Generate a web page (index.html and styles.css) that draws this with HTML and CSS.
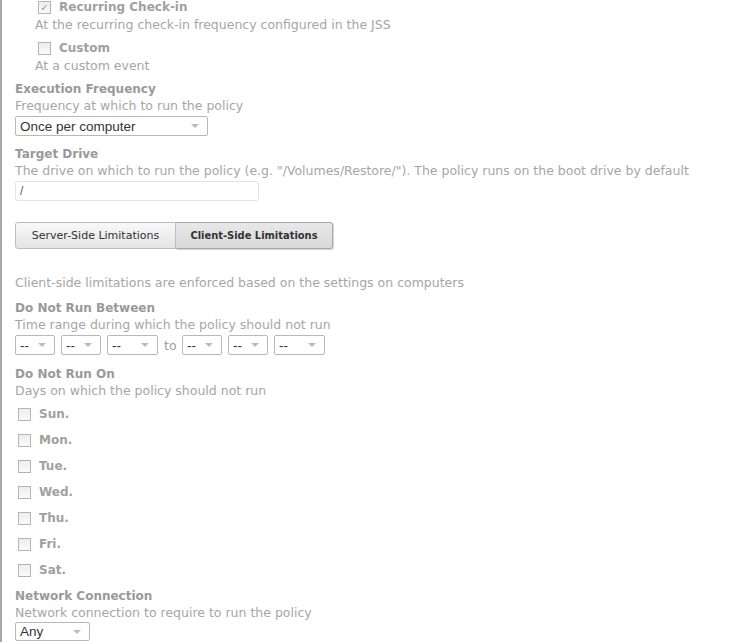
FILE: index.html
```html
<!DOCTYPE html>
<html lang="en">
<head>
    <meta charset="UTF-8">
    <title>Client-Side Limitations</title>
    <link rel="stylesheet" href="styles.css">
</head>
<body>
<div class="page">
    <div class="trigger first">
        <label class="check-row"><span class="box checked">&#10003;</span><span class="check-label">Recurring Check-in</span></label>
        <p class="desc">At the recurring check-in frequency configured in the JSS</p>
    </div>
    <div class="trigger">
        <label class="check-row"><span class="box"></span><span class="check-label">Custom</span></label>
        <p class="desc">At a custom event</p>
    </div>

    <div class="field exec">
        <h4>Execution Frequency</h4>
        <p class="desc">Frequency at which to run the policy</p>
        <div class="select wide"><span>Once per computer</span><i class="arrow"></i></div>
    </div>

    <div class="field drive">
        <h4>Target Drive</h4>
        <p class="desc">The drive on which to run the policy (e.g. "/Volumes/Restore/"). The policy runs on the boot drive by default</p>
        <div class="text-input">/</div>
    </div>

    <div class="tabs">
        <button class="tab">Server-Side Limitations</button>
        <button class="tab active">Client-Side Limitations</button>
    </div>

    <p class="desc intro">Client-side limitations are enforced based on the settings on computers</p>

    <div class="field between">
        <h4>Do Not Run Between</h4>
        <p class="desc">Time range during which the policy should not run</p>
        <div class="time-row">
            <div class="select small"><span>--</span><i class="arrow"></i></div>
            <div class="select small"><span>--</span><i class="arrow"></i></div>
            <div class="select ampm"><span>--</span><i class="arrow"></i></div>
            <span class="to">to</span>
            <div class="select small"><span>--</span><i class="arrow"></i></div>
            <div class="select small"><span>--</span><i class="arrow"></i></div>
            <div class="select ampm"><span>--</span><i class="arrow"></i></div>
        </div>
    </div>

    <div class="field days-field">
        <h4>Do Not Run On</h4>
        <p class="desc">Days on which the policy should not run</p>
        <div class="days">
            <label class="check-row day"><span class="box"></span><span class="check-label">Sun.</span></label>
            <label class="check-row day"><span class="box"></span><span class="check-label">Mon.</span></label>
            <label class="check-row day"><span class="box"></span><span class="check-label">Tue.</span></label>
            <label class="check-row day"><span class="box"></span><span class="check-label">Wed.</span></label>
            <label class="check-row day"><span class="box"></span><span class="check-label">Thu.</span></label>
            <label class="check-row day"><span class="box"></span><span class="check-label">Fri.</span></label>
            <label class="check-row day"><span class="box"></span><span class="check-label">Sat.</span></label>
        </div>
    </div>

    <div class="field network">
        <h4>Network Connection</h4>
        <p class="desc">Network connection to require to run the policy</p>
        <div class="select net"><span>Any</span><i class="arrow"></i></div>
    </div>
</div>
</body>
</html>
```

FILE: styles.css
```css
body {
    margin: 0;
    font-family: 'DejaVu Sans', Verdana, sans-serif;
    font-size: 12.5px;
    color: #999999;
    background-color: #FFFFFF;
    overflow: hidden;
}
.page {
    border-left: 2px solid #A8A8A8;
    min-height: 100vh;
    padding: 0 0 0 13px;
    box-sizing: border-box;
}
h4 {
    margin: 0;
    font-size: 12px;
    font-weight: bold;
    color: #999999;
    line-height: 16px;
}
.desc {
    margin: 0;
    color: #A6A6A6;
    line-height: 17px;
}

/* trigger checkboxes at the top */
.trigger {
    padding-left: 20px;
    margin-bottom: 6px;
}
.trigger.first {
    margin-top: -2px;
}
.trigger .desc {
    line-height: 18px;
}
.trigger + .trigger {
    margin-top: -1px;
}
.check-row {
    display: flex;
    align-items: center;
    gap: 8px;
    height: 18px;
    padding-left: 3px;
}
.box {
    width: 11px;
    height: 11px;
    border: 1px solid #B5B5B5;
    background: linear-gradient(#EDEDED, #FAFAFA);
    color: #9A9A9A;
    font-size: 10px;
    line-height: 11px;
    text-align: center;
}
.check-label {
    font-size: 12px;
    font-weight: bold;
    color: #A0A0A0;
}

.field {
    margin: 0;
}
.exec { margin-top: 6px; }
.drive { margin-top: 10px; }
.between { margin-top: 9px; }
.days-field { margin-top: 11px; }
.network { margin-top: 5px; }

/* fake select boxes */
.select {
    display: inline-flex;
    align-items: center;
    justify-content: space-between;
    height: 18px;
    border: 1px solid #B8B8B8;
    border-radius: 2px;
    padding: 0 8px 0 4px;
    margin-top: 2px;
    background-color: #FFFFFF;
    color: #333333;
    font-family: 'Liberation Sans', Arial, sans-serif;
    font-size: 13.5px;
}
.select.wide { width: 179px; }
.select.small { width: 26px; }
.select.ampm { width: 37px; }
.select.net {
    width: 61px;
    height: 17px;
    margin-top: 1px;
}
.arrow {
    width: 0;
    height: 0;
    border-left: 4px solid transparent;
    border-right: 4px solid transparent;
    border-top: 4px solid #BBBBBB;
}

.text-input {
    width: 238px;
    height: 18px;
    margin-top: 2px;
    padding-left: 4px;
    border: 1px solid #E3E3E3;
    border-radius: 3px;
    color: #555555;
    font-family: 'Liberation Sans', Arial, sans-serif;
    font-size: 12px;
    line-height: 18px;
}

/* tabs */
.tabs {
    display: flex;
    margin-top: 21px;
}
.tab {
    height: 27px;
    width: 161px;
    padding: 0;
    white-space: nowrap;
    font-family: 'DejaVu Sans', Verdana, sans-serif;
    font-size: 11px;
    color: #333333;
    background: linear-gradient(#F8F8F8, #E4E4E4);
    border: 1px solid #BDBDBD;
    border-radius: 3px 0 0 3px;
}
.tab.active {
    width: 157px;
    font-family: 'DejaVu Sans Condensed', 'DejaVu Sans', sans-serif;
    font-weight: bold;
    background: linear-gradient(#E8E8E8, #D9D9D9);
    border-color: #A9A9A9;
    border-left: none;
    border-radius: 0 3px 3px 0;
    box-shadow: 1px 1px 1px rgba(0, 0, 0, 0.18);
}

.intro {
    margin-top: 25px;
}

.time-row {
    display: flex;
    align-items: center;
    gap: 6px;
    margin-top: 2px;
}
.time-row .select {
    margin-top: 0;
}
.to {
    width: 12px;
    color: #A0A0A0;
    text-align: center;
}

.days {
    padding-top: 2px;
}
.day {
    height: 26px;
}
```
